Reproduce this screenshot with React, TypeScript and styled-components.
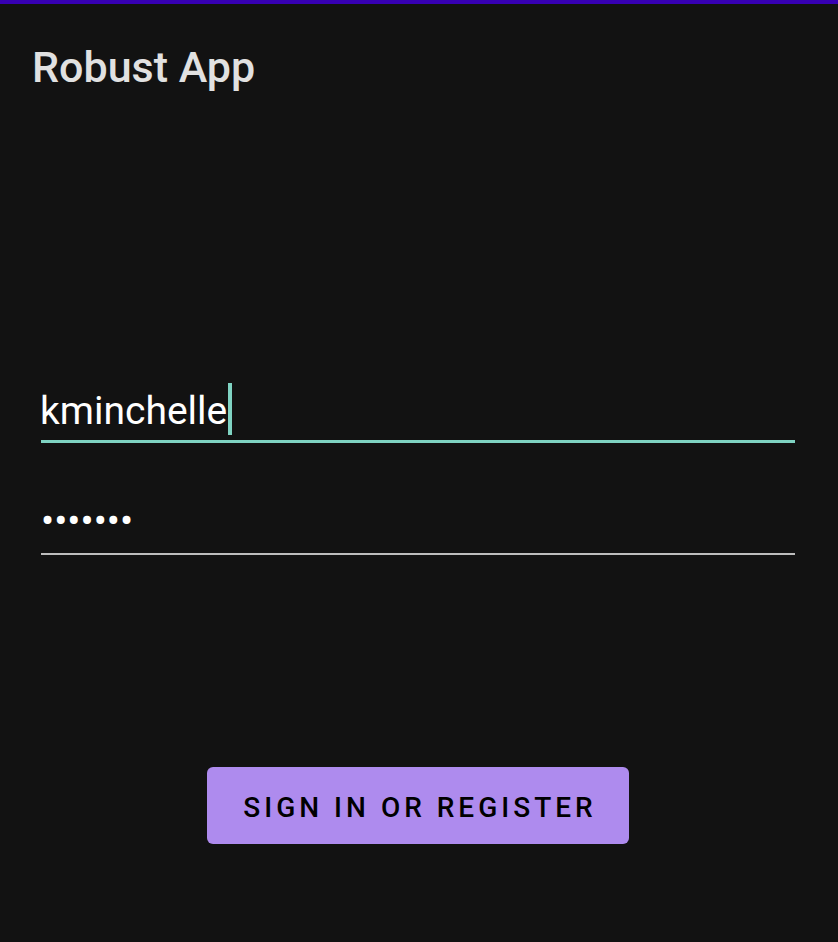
import styled, { createGlobalStyle } from 'styled-components';

const GlobalStyle = createGlobalStyle`
  html, body {
    margin: 0;
    padding: 0;
    background: #121212;
  }
  body {
    font-family: Roboto, 'Noto Sans', sans-serif;
  }
`;

const Screen = styled.div`
  min-height: 942px;
  background: #121212;
  display: flex;
  flex-direction: column;
`;

const StatusStrip = styled.div`
  height: 4px;
  background: #3700b3;
`;

const Title = styled.h1`
  margin: 42px 0 0 32px;
  font-size: 43px;
  line-height: 43px;
  font-weight: 500;
  color: #e1e1e1;
`;

const Form = styled.div`
  display: flex;
  flex-direction: column;
  padding: 0 43px 0 41px;
  margin-top: 303px;
`;

const Field = styled.div<{ $focused?: boolean }>`
  font-size: 39px;
  line-height: 39px;
  color: #ffffff;
  padding-bottom: 9px;
  border-bottom: ${(p) => (p.$focused ? '3px solid #7fd3c2' : '2px solid #bdbdbd')};
  white-space: nowrap;
`;

const Value = styled.span`
  margin-left: -1px;
`;

const Dots = styled.span`
  position: relative;
  top: -3px;
`;

const Caret = styled.span`
  display: inline-block;
  width: 4px;
  height: 52px;
  margin: -20px 0 -11px 1px;
  background: #7fd3c2;
`;

const FieldGap = styled.div`
  height: 62px;
`;

const Actions = styled.div`
  display: flex;
  justify-content: center;
  margin-top: 212px;
  padding-right: 2px;
`;

const PrimaryButton = styled.button`
  width: 422px;
  height: 77px;
  border: none;
  border-radius: 6px;
  background: #ae8bee;
  color: #000000;
  font-family: Roboto, 'Noto Sans', sans-serif;
  font-size: 28px;
  font-weight: 500;
  letter-spacing: 4px;
  text-transform: uppercase;
  padding: 4px 0 0 4px;
  cursor: pointer;
`;

export default function App() {
  return (
    <>
      <GlobalStyle />
      <Screen>
        <StatusStrip />
        <Title>Robust App</Title>
        <Form>
          <Field $focused>
            <Value>kminchelle</Value>
            <Caret />
          </Field>
          <FieldGap />
          <Field>
            <Dots>{'\u2022'.repeat(7)}</Dots>
          </Field>
        </Form>
        <Actions>
          <PrimaryButton>Sign in or register</PrimaryButton>
        </Actions>
      </Screen>
    </>
  );
}
